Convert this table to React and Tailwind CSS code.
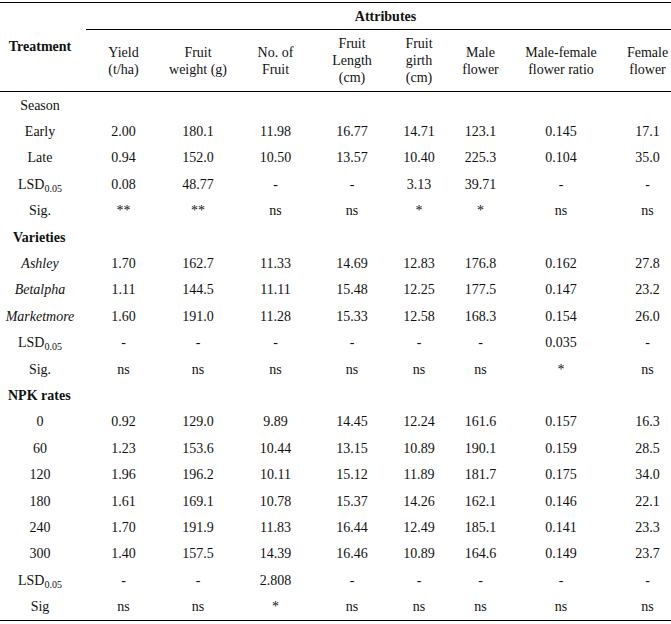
const cols = 'grid grid-cols-[80px_87px_62px_93px_60px_74px_49px_112px_61px]';

const Lsd = () => (
  <span>
    LSD<sub className="text-[10px] align-baseline relative top-[3px]">0.05</sub>
  </span>
);

const rows = [
  { type: 'plain', label: 'Season' },
  { label: 'Early', v: ['2.00', '180.1', '11.98', '16.77', '14.71', '123.1', '0.145', '17.1'] },
  { label: 'Late', v: ['0.94', '152.0', '10.50', '13.57', '10.40', '225.3', '0.104', '35.0'] },
  { label: 'lsd', v: ['0.08', '48.77', '-', '-', '3.13', '39.71', '-', '-'] },
  { label: 'Sig.', v: ['**', '**', 'ns', 'ns', '*', '*', 'ns', 'ns'] },
  { type: 'head', label: 'Varieties', pad: 'pl-[13px]' },
  { label: 'Ashley', italic: true, v: ['1.70', '162.7', '11.33', '14.69', '12.83', '176.8', '0.162', '27.8'] },
  { label: 'Betalpha', italic: true, v: ['1.11', '144.5', '11.11', '15.48', '12.25', '177.5', '0.147', '23.2'] },
  { label: 'Marketmore', italic: true, v: ['1.60', '191.0', '11.28', '15.33', '12.58', '168.3', '0.154', '26.0'] },
  { label: 'lsd', v: ['-', '-', '-', '-', '-', '-', '0.035', '-'] },
  { label: 'Sig.', v: ['ns', 'ns', 'ns', 'ns', 'ns', 'ns', '*', 'ns'] },
  { type: 'head', label: 'NPK rates', pad: 'pl-[8px]' },
  { label: '0', v: ['0.92', '129.0', '9.89', '14.45', '12.24', '161.6', '0.157', '16.3'] },
  { label: '60', v: ['1.23', '153.6', '10.44', '13.15', '10.89', '190.1', '0.159', '28.5'] },
  { label: '120', v: ['1.96', '196.2', '10.11', '15.12', '11.89', '181.7', '0.175', '34.0'] },
  { label: '180', v: ['1.61', '169.1', '10.78', '15.37', '14.26', '162.1', '0.146', '22.1'] },
  { label: '240', v: ['1.70', '191.9', '11.83', '16.44', '12.49', '185.1', '0.141', '23.3'] },
  { label: '300', v: ['1.40', '157.5', '14.39', '16.46', '10.89', '164.6', '0.149', '23.7'] },
  { label: 'lsd', v: ['-', '-', '2.808', '-', '-', '-', '-', '-'] },
  { label: 'Sig', v: ['ns', 'ns', '*', 'ns', 'ns', 'ns', 'ns', 'ns'] },
];

const headers = [
  ['Yield', '(t/ha)'],
  ['Fruit', 'weight (g)'],
  ['No. of', 'Fruit'],
  ['Fruit', 'Length', '(cm)'],
  ['Fruit', 'girth', '(cm)'],
  ['Male', 'flower'],
  ['Male-female', 'flower ratio'],
  ['Female', 'flower'],
];

export default function App() {
  return (
    <div className="w-[671px] h-[624px] overflow-hidden bg-white pt-[2px] font-[family-name:'Liberation_Serif',serif] text-[14px] text-[#111]">
      <div className="w-[685px] border-t border-black">
        {/* header */}
        <div className={`${cols} grid-rows-[27px_61px] border-b border-black`}>
          <div className="row-span-2 flex items-center justify-center font-bold pb-[2px]">Treatment</div>
          <div className="col-span-8 ml-[6px] pl-[7px] border-b border-black flex items-center justify-center font-bold">
            Attributes
          </div>
          {headers.map((h, i) => (
            <div key={i} className="flex flex-col items-center justify-center leading-[17px] whitespace-nowrap">
              {h.map((line, j) => (
                <span key={j}>{line}</span>
              ))}
            </div>
          ))}
        </div>

        {/* body */}
        <div className="border-b border-black">
          {rows.map((r, i) => {
            if (r.type === 'plain') {
              return (
                <div key={i} className={`${cols} h-[26.4px] items-center`}>
                  <div className="text-center">{r.label}</div>
                </div>
              );
            }
            if (r.type === 'head') {
              return (
                <div key={i} className={`h-[26.4px] flex items-center font-bold ${r.pad}`}>
                  {r.label}
                </div>
              );
            }
            return (
              <div key={i} className={`${cols} h-[26.4px] items-center`}>
                <div className={`text-center whitespace-nowrap ${r.italic ? 'italic' : ''}`}>
                  {r.label === 'lsd' ? <Lsd /> : r.label}
                </div>
                {r.v.map((v, j) => (
                  <div key={j} className="text-center whitespace-nowrap">
                    {v}
                  </div>
                ))}
              </div>
            );
          })}
        </div>
      </div>
    </div>
  );
}
